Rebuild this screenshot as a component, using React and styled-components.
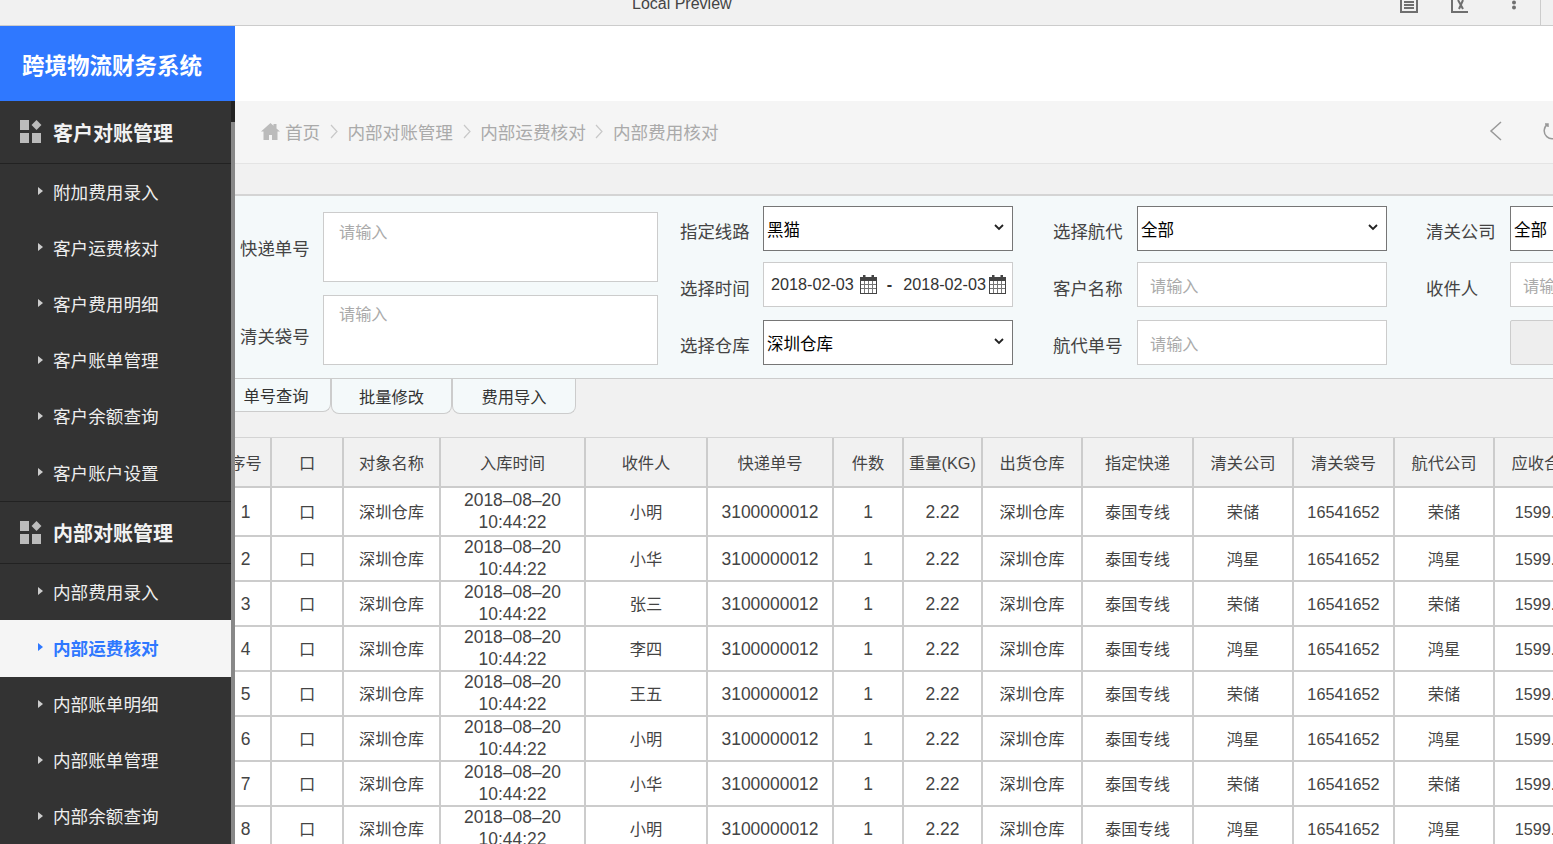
import React from 'react';
import styled, { createGlobalStyle } from 'styled-components';

const GlobalStyle = createGlobalStyle`
  * { box-sizing: border-box; }
  html, body { margin: 0; padding: 0; height: 100%; overflow: hidden; }
  body {
    font-family: "Liberation Sans", "Noto Sans CJK SC", sans-serif;
    color: #333;
    background: #fff;
  }
`;

const Page = styled.div`
  height: 844px;
  overflow: hidden;
  display: flex;
  flex-direction: column;
`;

const ChromeBar = styled.div`
  height: 26px;
  flex: none;
  background: #f1f1f1;
  border-bottom: 1px solid #ccc;
  overflow: hidden;
  display: flex;
  align-items: flex-start;
`;

const ChromeTitle = styled.div`
  margin: -5px 0 0 632px;
  font-size: 16px;
  line-height: 18px;
  color: #444;
`;

const ChromeTools = styled.div`
  margin-left: auto;
  width: 153px;
  height: 25px;
  display: flex;
  align-items: flex-start;
`;

const ChromeIcon = styled.svg`
  flex: none;
  margin-left: ${p => p.$gap}px;
  color: #6f6f6f;
`;

const ChromeEdge = styled.div`
  margin-left: auto;
  margin-right: 12px;
  width: 1px;
  height: 25px;
  background: #ccc;
`;

const Body = styled.div`
  flex: 1;
  min-height: 0;
  display: flex;
`;

const Side = styled.aside`
  width: 235px;
  flex: none;
  display: flex;
  flex-direction: column;
  background: #333;
  position: relative;
  overflow: hidden;
`;

const Logo = styled.div`
  height: 75px;
  flex: none;
  background: #2f78ff;
  color: #fff;
  font-size: 22.5px;
  font-weight: 700;
  padding-left: 22px;
  display: flex;
  align-items: center;
`;

const SideScroll = styled.div`
  width: 231px;
`;

const Track = styled.div`
  position: absolute;
  top: 75px;
  right: 0;
  width: 4px;
  bottom: 0;
  background: #222;
`;

const Thumb = styled.div`
  position: absolute;
  top: 21px;
  left: 0;
  right: 0;
  bottom: 0;
  background: #888;
`;

const GroupHead = styled.div`
  height: 63px;
  display: flex;
  align-items: center;
  padding-left: 20px;
  gap: 11px;
  color: #f2f2f2;
  font-size: 20px;
  font-weight: 700;
  border-top: ${p => (p.$top ? '1px solid #222' : 'none')};
  border-bottom: 1px solid #222;
`;

const Item = styled.div`
  height: 56.2px;
  display: flex;
  align-items: center;
  padding: 0 0 2px 38px;
  font-size: 17.6px;
  gap: 10px;
  color: ${p => (p.$active ? '#2f78ff' : '#eee')};
  font-weight: ${p => (p.$active ? 700 : 400)};
  background: ${p => (p.$active ? '#f5f5f5' : 'transparent')};
  &::before {
    content: '';
    width: 0;
    height: 0;
    border-left: 5px solid ${p => (p.$active ? '#2f78ff' : '#ccc')};
    border-top: 4px solid transparent;
    border-bottom: 4px solid transparent;
  }
`;

const Main = styled.main`
  flex: 1;
  min-width: 0;
  overflow: hidden;
  display: flex;
  flex-direction: column;
  background: #f1f1f1;
`;

const TopBlank = styled.div`
  height: 75px;
  flex: none;
  background: #fff;
`;

const Crumbs = styled.nav`
  height: 63px;
  flex: none;
  background: #f5f5f5;
  border-bottom: 1px solid #e4e4e4;
  display: flex;
  align-items: center;
  padding: 0 0 2px 26px;
  font-size: 17.6px;
  color: #aaa;
`;

const CrumbSep = styled.svg`
  margin: 0 9.6px;
  flex: none;
`;

const HomeIcon = styled.svg`
  margin-right: 5px;
  flex: none;
`;

const CrumbTools = styled.div`
  margin-left: auto;
  display: flex;
  align-items: center;
  gap: 40px;
  margin-right: -9px;
`;

const Gap = styled.div`
  height: 32px;
  flex: none;
  border-bottom: 2px solid #d4d4d4;
`;

const Filters = styled.section`
  height: 183px;
  flex: none;
  background: #f4f9fa;
  border-bottom: 1px solid #ccc;
  display: flex;
  overflow: hidden;
  padding: 10px 0 0 5px;
`;

const NoteCol = styled.div`
  width: 440px;
  flex: none;
  display: flex;
  flex-direction: column;
  gap: 13px;
  padding-top: 6px;
`;

const NoteRow = styled.div`
  display: flex;
  align-items: ${p => (p.$low ? 'flex-end' : 'center')};
`;

const Label = styled.label`
  flex: none;
  width: ${p => p.$w}px;
  font-size: 17.4px;
  color: #444;
  white-space: nowrap;
  padding-top: ${p => p.$nudge ?? 6}px;
  padding-bottom: ${p => p.$under || 0}px;
`;

const Note = styled.div`
  width: 335px;
  height: 70px;
  background: #fff;
  border: 1px solid #ccc;
  padding: ${p => p.$top}px 15px 0;
  font-size: 16.2px;
  color: #aaa;
`;

const FieldCol = styled.div`
  flex: none;
  width: ${p => p.$w}px;
  display: flex;
  flex-direction: column;
`;

const FieldRow = styled.div`
  display: flex;
  align-items: center;
  margin-bottom: ${p => p.$mb || 0}px;
`;

const Select = styled.div`
  width: ${p => p.$w || 250}px;
  flex: none;
  height: 45px;
  background: #fff;
  border: 1px solid #767676;
  padding: 0 8px 0 3px;
  display: flex;
  align-items: center;
  justify-content: space-between;
  font-size: 16.5px;
  color: #000;
  white-space: nowrap;
`;

const SelectCaret = styled.svg`
  margin-top: -3px;
  flex: none;
`;

const Input = styled.div`
  width: ${p => p.$w || 250}px;
  flex: none;
  height: 45px;
  background: #fff;
  border: 1px solid #ccc;
  padding: 0 12px 0 12px;
  display: flex;
  align-items: center;
  font-size: 16.2px;
  color: #aaa;
  white-space: nowrap;
`;

const DateBox = styled(Input)`
  padding: 0 6px 0 7px;
  color: #333;
`;

const DateDash = styled.span`
  margin: 0 11px 0 10px;
  font-weight: 700;
`;

const CalendarIcon = styled.svg`
  flex: none;
  margin-left: ${p => p.$gap}px;
`;

const Blank = styled.div`
  width: 200px;
  flex: none;
  height: 45px;
  background: #eee;
  border: 1px solid #ccc;
  border-radius: 2px;
`;

const Tabs = styled.div`
  flex: none;
  height: 59px;
  display: flex;
  align-items: flex-start;
  margin-left: -14px;
  border-bottom: 1px solid #d4d4d4;
`;

const Tab = styled.div`
  width: ${p => p.$w}px;
  height: ${p => p.$h}px;
  background: #f4f9fa;
  border: 1px solid #ccc;
  border-top: none;
  border-radius: 0 0 8px 8px;
  font-size: 16.25px;
  color: #333;
  text-align: center;
  line-height: ${p => p.$h + 2}px;
`;

const Table = styled.table`
  flex: none;
  margin-left: -11px;
  border-collapse: separate;
  border-spacing: 0;
  table-layout: fixed;
  width: 1370px;
  font-size: 16.25px;
  color: #444;
  background: #fff;
  text-align: center;
  th, td {
    border: solid #ccc;
    border-width: 0 2px 2px 0;
    padding: 2px 0 0;
    font-weight: 400;
    line-height: 21.5px;
    vertical-align: middle;
    white-space: nowrap;
  }
  th {
    height: 50px;
    background: #f1f1f1;
    padding-top: 4px;
  }
  th:first-child, td:first-child {
    padding-right: 3px;
  }
`;

const Row = styled.tr`
  td { height: ${p => p.$h}px; }
`;

const DateCell = styled.td`
  font-size: 17.45px;
  && { padding-top: 0; }
`;

const Num = styled.td`
  font-size: ${p => (p.$small ? 16.25 : 17.45)}px;
`;

const Tile = () => (
  <svg width="22" height="24" viewBox="0 0 22 24">
    <rect x="0" y="0" width="9" height="10" fill="#bbb" />
    <rect x="13" y="1.500" width="7" height="7" fill="#bbb" transform="rotate(45 16.500 5)" />
    <rect x="0" y="13" width="9" height="10" fill="#bbb" />
    <rect x="12" y="13" width="9" height="10" fill="#bbb" />
  </svg>
);

const Sep = () => (
  <CrumbSep width="8" height="15" viewBox="0 0 8 15">
    <path d="M1 1l6 6.500-6 6.500" fill="none" stroke="#c8c8c8" strokeWidth="1.200" />
  </CrumbSep>
);

const Caret = () => (
  <SelectCaret width="10" height="7" viewBox="0 0 10 7">
    <path d="M1 1l4 4 4-4" fill="none" stroke="#222" strokeWidth="1.800" />
  </SelectCaret>
);

const Calendar = ({ gap }) => (
  <CalendarIcon $gap={gap} width="17" height="19" viewBox="0 0 17 19">
    <rect x="0.500" y="2.500" width="16" height="16" fill="#fff" stroke="#444" />
    <rect x="0" y="2" width="17" height="4" fill="#444" />
    <rect x="3" y="0" width="2.500" height="5" fill="#444" />
    <rect x="11.500" y="0" width="2.500" height="5" fill="#444" />
    <path d="M4.500 6v12M8.500 6v12M12.500 6v12M1 9.500h15M1 13.500h15" stroke="#777" strokeWidth="1" />
  </CalendarIcon>
);

const rows = [
  ['小明', '荣储'], ['小华', '鸿星'], ['张三', '荣储'], ['李四', '鸿星'],
  ['王五', '荣储'], ['小明', '鸿星'], ['小华', '荣储'], ['小明', '鸿星'],
];

const heads = ['序号', '口', '对象名称', '入库时间', '收件人', '快递单号', '件数', '重量(KG)', '出货仓库', '指定快递', '清关公司', '清关袋号', '航代公司', '应收合计'];
const widths = [48, 72, 97, 145, 122, 126, 70, 79, 100, 111, 100, 101, 100, 100];

export default function App() {
  return (
    <>
      <GlobalStyle />
      <Page>
        <ChromeBar>
          <ChromeTitle>Local Preview</ChromeTitle>
          <ChromeTools>
            <ChromeIcon $gap={0} width="18" height="13" viewBox="0 0 18 13">
              <path d="M1 0v12h16V0M4 2h10M4 5h10M4 8h10" fill="none" stroke="currentColor" strokeWidth="2" />
            </ChromeIcon>
            <ChromeIcon $gap={33} width="18" height="13" viewBox="0 0 18 13">
              <path d="M1 0v12h16M7 0l5 9M12 0L8 9" fill="none" stroke="currentColor" strokeWidth="2" />
            </ChromeIcon>
            <ChromeIcon $gap={42} width="6" height="12" viewBox="0 0 6 12">
              <circle cx="3" cy="2.500" r="2" fill="currentColor" />
              <circle cx="3" cy="7.500" r="2" fill="currentColor" />
            </ChromeIcon>
            <ChromeEdge />
          </ChromeTools>
        </ChromeBar>
        <Body>
          <Side>
            <Logo>跨境物流财务系统</Logo>
            <SideScroll>
              <GroupHead><Tile />客户对账管理</GroupHead>
              {['附加费用录入', '客户运费核对', '客户费用明细', '客户账单管理', '客户余额查询', '客户账户设置'].map(t => <Item key={t}>{t}</Item>)}
              <GroupHead $top><Tile />内部对账管理</GroupHead>
              {['内部费用录入', '内部运费核对', '内部账单明细', '内部账单管理', '内部余额查询'].map(t => <Item key={t} $active={t === '内部运费核对'}>{t}</Item>)}
            </SideScroll>
            <Track><Thumb /></Track>
          </Side>
          <Main>
            <TopBlank />
            <Crumbs>
              <HomeIcon width="19" height="17" viewBox="0 0 19 17">
                <path d="M9.500 0L0 8.500h2.500V17h5.500v-5h3v5h5.500V8.500H19L15.500 5.400V1h-3v1.700z" fill="#bbb" />
              </HomeIcon>
              首页<Sep />内部对账管理<Sep />内部运费核对<Sep />内部费用核对
              <CrumbTools>
                <svg width="14" height="20" viewBox="0 0 14 20">
                  <path d="M12 1L2 10l10 9" fill="none" stroke="#999" strokeWidth="1.500" />
                </svg>
                <svg width="19" height="20" viewBox="0 0 19 20">
                  <path d="M5 3a8 8 0 1 0 6-1M2 3l3 0 0 3" fill="none" stroke="#999" strokeWidth="1.500" />
                </svg>
              </CrumbTools>
            </Crumbs>
            <Gap />
            <Filters>
              <NoteCol>
                <NoteRow>
                  <Label $w={83} $nudge={0}>快递单号</Label>
                  <Note $top={6}>请输入</Note>
                </NoteRow>
                <NoteRow $low>
                  <Label $w={83} $under={17}>清关袋号</Label>
                  <Note $top={5}>请输入</Note>
                </NoteRow>
              </NoteCol>
              <FieldCol $w={373}>
                <FieldRow $mb={11}><Label $w={83} $nudge={4}>指定线路</Label><Select>黑猫<Caret /></Select></FieldRow>
                <FieldRow $mb={13}>
                  <Label $w={83}>选择时间</Label>
                  <DateBox>2018-02-03<Calendar gap={6} /><DateDash>-</DateDash>2018-02-03<Calendar gap={3} /></DateBox>
                </FieldRow>
                <FieldRow><Label $w={83} $nudge={3}>选择仓库</Label><Select>深圳仓库<Caret /></Select></FieldRow>
              </FieldCol>
              <FieldCol $w={373}>
                <FieldRow $mb={11}><Label $w={84} $nudge={4}>选择航代</Label><Select>全部<Caret /></Select></FieldRow>
                <FieldRow $mb={13}><Label $w={84}>客户名称</Label><Input>请输入</Input></FieldRow>
                <FieldRow><Label $w={84} $nudge={3}>航代单号</Label><Input>请输入</Input></FieldRow>
              </FieldCol>
              <FieldCol $w={300}>
                <FieldRow $mb={11}><Label $w={84} $nudge={4}>清关公司</Label><Select $w={200}>全部</Select></FieldRow>
                <FieldRow $mb={13}><Label $w={84}>收件人</Label><Input $w={200}>请输入</Input></FieldRow>
                <FieldRow><Label $w={84} /><Blank /></FieldRow>
              </FieldCol>
            </Filters>
            <Tabs>
              <Tab $w={110} $h={33}>单号查询</Tab>
              <Tab $w={121} $h={35}>批量修改</Tab>
              <Tab $w={124} $h={35}>费用导入</Tab>
            </Tabs>
            <Table>
              <colgroup>{widths.map((w, i) => <col key={i} style={{ width: w }} />)}</colgroup>
              <thead>
                <tr>{heads.map(h => <th key={h}>{h}</th>)}</tr>
              </thead>
              <tbody>
                {rows.map(([name, co], i) => (
                  <Row key={i} $h={i === 0 ? 49 : 45}>
                    <Num>{i + 1}</Num>
                    <td>口</td>
                    <td>深圳仓库</td>
                    <DateCell>2018–08–20<br />10:44:22</DateCell>
                    <td>{name}</td>
                    <Num>3100000012</Num>
                    <Num>1</Num>
                    <Num>2.22</Num>
                    <td>深圳仓库</td>
                    <td>泰国专线</td>
                    <td>{co}</td>
                    <Num $small>16541652</Num>
                    <td>{co}</td>
                    <Num $small>1599.00</Num>
                  </Row>
                ))}
              </tbody>
            </Table>
          </Main>
        </Body>
      </Page>
    </>
  );
}
